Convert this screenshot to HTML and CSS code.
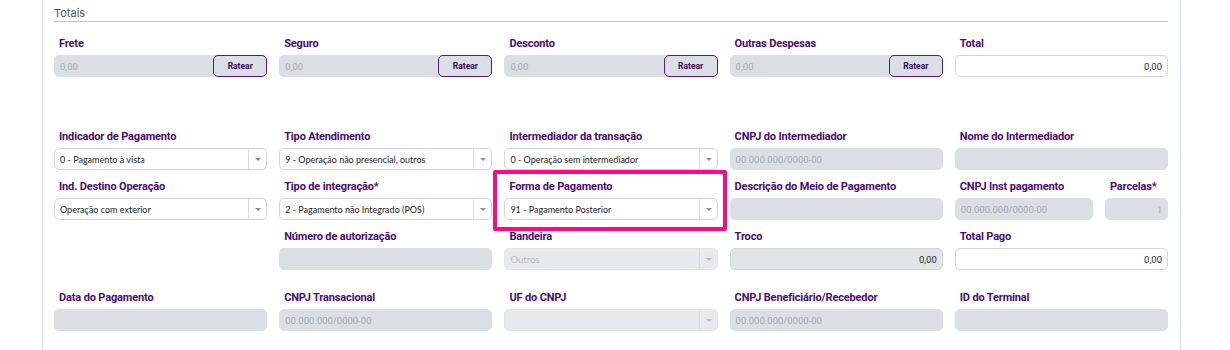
FILE: index.html
```html
<!DOCTYPE html>
<html lang="pt-BR">
<head>
<meta charset="utf-8">
<title>Totais</title>
<link rel="stylesheet" href="styles.css">
</head>
<body>
<div class="panel">
  <div class="section-title">Totais</div>

  <div class="grid row-first">
    <div class="field">
      <div class="label">Frete</div>
      <div class="control disabled with-btn"><span class="ph">0,00</span><button class="btn">Ratear</button></div>
    </div>
    <div class="field">
      <div class="label">Seguro</div>
      <div class="control disabled with-btn"><span class="ph">0,00</span><button class="btn">Ratear</button></div>
    </div>
    <div class="field">
      <div class="label">Desconto</div>
      <div class="control disabled with-btn"><span class="ph">0,00</span><button class="btn">Ratear</button></div>
    </div>
    <div class="field">
      <div class="label">Outras Despesas</div>
      <div class="control disabled with-btn"><span class="ph">0,00</span><button class="btn">Ratear</button></div>
    </div>
    <div class="field">
      <div class="label">Total</div>
      <div class="control right"><span class="val">0,00</span></div>
    </div>
  </div>

  <div class="grid rows-mid">
    <div class="field">
      <div class="label">Indicador de Pagamento</div>
      <div class="control select"><span class="sel">0 - Pagamento à vista</span><span class="arrow"></span></div>
    </div>
    <div class="field">
      <div class="label">Tipo Atendimento</div>
      <div class="control select"><span class="sel">9 - Operação não presencial, outros</span><span class="arrow"></span></div>
    </div>
    <div class="field">
      <div class="label">Intermediador da transação</div>
      <div class="control select"><span class="sel">0 - Operação sem intermediador</span><span class="arrow"></span></div>
    </div>
    <div class="field">
      <div class="label">CNPJ do Intermediador</div>
      <div class="control disabled"><span class="ph">00.000.000/0000-00</span></div>
    </div>
    <div class="field">
      <div class="label">Nome do Intermediador</div>
      <div class="control disabled"></div>
    </div>

    <div class="field">
      <div class="label">Ind. Destino Operação</div>
      <div class="control select"><span class="sel">Operação com exterior</span><span class="arrow"></span></div>
    </div>
    <div class="field">
      <div class="label">Tipo de integração*</div>
      <div class="control select"><span class="sel">2 - Pagamento não Integrado (POS)</span><span class="arrow"></span></div>
    </div>
    <div class="field highlight">
      <div class="label">Forma de Pagamento</div>
      <div class="control select"><span class="sel">91 - Pagamento Posterior</span><span class="arrow"></span></div>
    </div>
    <div class="field">
      <div class="label">Descrição do Meio de Pagamento</div>
      <div class="control disabled"></div>
    </div>
    <div class="split">
      <div class="field">
        <div class="label">CNPJ Inst pagamento</div>
        <div class="control disabled"><span class="ph">00.000.000/0000-00</span></div>
      </div>
      <div class="field">
        <div class="label">Parcelas*</div>
        <div class="control disabled right"><span class="ph">1</span></div>
      </div>
    </div>

    <div class="empty"></div>
    <div class="field">
      <div class="label">Número de autorização</div>
      <div class="control disabled"></div>
    </div>
    <div class="field">
      <div class="label">Bandeira</div>
      <div class="control select select-disabled"><span class="ph">Outros</span><span class="arrow"></span></div>
    </div>
    <div class="field">
      <div class="label">Troco</div>
      <div class="control disabled bordered right"><span class="val">0,00</span></div>
    </div>
    <div class="field">
      <div class="label">Total Pago</div>
      <div class="control right"><span class="val">0,00</span></div>
    </div>
  </div>

  <div class="grid row-last">
    <div class="field">
      <div class="label">Data do Pagamento</div>
      <div class="control disabled"></div>
    </div>
    <div class="field">
      <div class="label">CNPJ Transacional</div>
      <div class="control disabled"><span class="ph">00.000.000/0000-00</span></div>
    </div>
    <div class="field">
      <div class="label">UF do CNPJ</div>
      <div class="control select select-disabled"><span class="ph"></span><span class="arrow"></span></div>
    </div>
    <div class="field">
      <div class="label">CNPJ Beneficiário/Recebedor</div>
      <div class="control disabled"><span class="ph">00.000.000/0000-00</span></div>
    </div>
    <div class="field">
      <div class="label">ID do Terminal</div>
      <div class="control disabled"></div>
    </div>
  </div>
</div>
</body>
</html>
```

FILE: styles.css
```css
* { box-sizing: border-box; }

html, body {
  margin: 0;
  padding: 0;
  background: #ffffff;
  height: 100%;
}

body {
  font-family: "Inter", "Roboto", sans-serif;
}

.panel {
  margin-left: 42px;
  width: 1139px;
  height: 350px;
  border-left: 1px solid #d6dde3;
  border-right: 1px solid #d6dde3;
  padding: 7px 12px 0 11px;
}

.section-title {
  font-family: "Inter", sans-serif;
  font-size: 11px;
  line-height: 13px;
  color: #50565c;
  border-bottom: 1px solid #bfc4c9;
  padding-bottom: 1px;
}

.grid {
  display: grid;
  grid-template-columns: repeat(5, 1fr);
  column-gap: 12px;
  row-gap: 10px;
}

.row-first { margin-top: 15px; }
.rows-mid { margin-top: 53px; }
.row-last { margin-top: 21px; }

.field {
  position: relative;
  display: flex;
  flex-direction: column;
}

.split {
  display: grid;
  grid-template-columns: 1fr 63px;
  column-gap: 12px;
}

.label {
  font-family: "Roboto", sans-serif;
  font-weight: 700;
  font-size: 11px;
  line-height: 14px;
  color: #4a0a72;
  margin-bottom: 4px;
  padding-left: 5px;
  white-space: nowrap;
  letter-spacing: -0.15px;
}

.control {
  position: relative;
  height: 22px;
  border: 1px solid #cfd6dc;
  border-radius: 5px;
  background: #ffffff;
  display: flex;
  align-items: center;
  padding: 0 5px;
  font-size: 9px;
}

.control.disabled {
  background: #d9dfe2;
  border-color: #d9dfe2;
}

.control.disabled.bordered {
  background: #e0e5e8;
  border-color: #cfd6dc;
}

.control.right { justify-content: flex-end; }

.ph {
  font-family: "Roboto", sans-serif;
  font-size: 9.5px;
  color: #a3abb1;
}

.val {
  font-family: "Roboto", sans-serif;
  font-size: 9.5px;
  color: #2d2d2d;
}

.with-btn { padding-right: 0; }

.with-btn .ph { flex: 1; }

.btn {
  position: absolute;
  right: -1px;
  top: -1px;
  width: 54px;
  height: 22px;
  border: 1px solid #5b1585;
  border-radius: 5px;
  background: transparent;
  font-family: "Roboto", sans-serif;
  font-weight: 700;
  font-size: 8.5px;
  color: #3d0c5e;
  padding: 0;
  cursor: pointer;
}

.control.select {
  padding-right: 0;
}

.sel {
  flex: 1;
  font-family: "Lato", sans-serif;
  font-size: 9px;
  color: #1e1e1e;
  white-space: nowrap;
  overflow: hidden;
}

.select .ph { flex: 1; }

.arrow {
  width: 18px;
  height: 20px;
  border-left: 1px solid #d8dde1;
  position: relative;
  flex: none;
}

.arrow::after {
  content: "";
  position: absolute;
  left: 6px;
  top: 9px;
  border-left: 3.5px solid transparent;
  border-right: 3.5px solid transparent;
  border-top: 3.5px solid #8a8f94;
}

.select-disabled {
  background: #e6eaed;
  border-color: #e0e5e8;
}

.select-disabled .arrow::after { border-top-color: #b3b9be; }

.select-disabled .ph {
  font-family: "Lato", sans-serif;
  color: #b5bcc1;
}

.highlight::after {
  content: "";
  position: absolute;
  left: -11px;
  right: -9px;
  top: -10px;
  bottom: -11px;
  border: 4px solid #ff0a84;
  border-radius: 2px;
  pointer-events: none;
}
```
